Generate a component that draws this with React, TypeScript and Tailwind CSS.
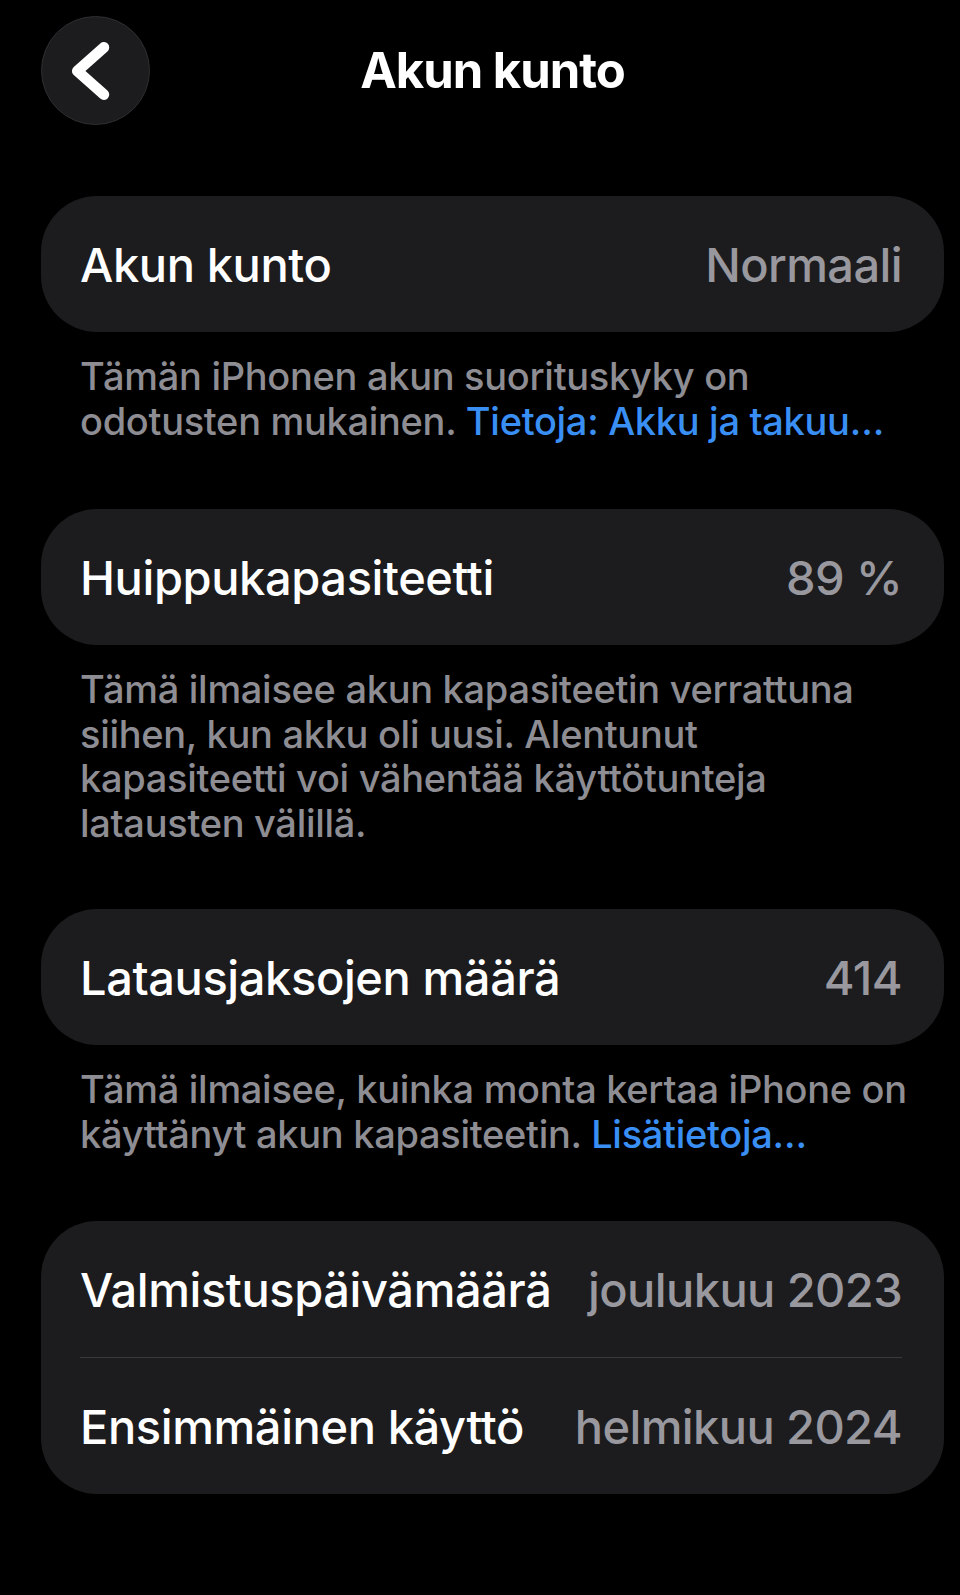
import React from 'react';

const font = { fontFamily: 'Inter, "Noto Sans", sans-serif' };

const Row = ({ label, value }: { label: string; value: string }) => (
    <div className='flex h-[136px] items-center justify-between pl-[39px] pr-[42px]'>
        <span className='text-[47px] font-medium leading-none text-white tracking-[-0.4px]'>{label}</span>
        <span className='text-[47px] font-medium leading-none text-[#98989e] tracking-[-0.6px]'>{value}</span>
    </div>
);

const Note = ({ children }: { children: React.ReactNode }) => (
    <p className='mt-[22px] pl-[39px] pr-[34px] text-[38px] font-medium leading-[44.5px] text-[#8d8d93] tracking-[-0.3px]'>
        {children}
    </p>
);

const App = () => {
    return (
        <div className='min-h-[1595px] w-full bg-black pl-[41px] pr-[16px] pt-[16px]' style={font}>
            <header className='grid grid-cols-[109px_1fr_109px] items-center'>
                <button className='flex h-[109px] w-[109px] items-center justify-center rounded-full border border-[#2e2e30] bg-[#1c1c1e]'>
                    <svg width='109' height='109' viewBox='0 0 109 109' fill='none'>
                        <path d='M63 31 L36 55 L63 79' stroke='white' strokeWidth='11' strokeLinecap='round' strokeLinejoin='round' />
                    </svg>
                </button>
                <h1 className='text-center text-[49px] font-bold text-white tracking-[-1px]'>Akun kunto</h1>
                <div />
            </header>

            <section className='mt-[71px]'>
                <div className='rounded-[56px] bg-[#1c1c1e]'>
                    <Row label='Akun kunto' value='Normaali' />
                </div>
                <Note>
                    Tämän iPhonen akun suorituskyky on odotusten mukainen.{' '}
                    <span className='text-[#3a8ff5]'>Tietoja: Akku ja takuu…</span>
                </Note>
            </section>

            <section className='mt-[66px]'>
                <div className='rounded-[56px] bg-[#1c1c1e]'>
                    <Row label='Huippukapasiteetti' value='89 %' />
                </div>
                <Note>
                    Tämä ilmaisee akun kapasiteetin verrattuna siihen, kun akku oli uusi. Alentunut kapasiteetti voi vähentää käyttötunteja latausten välillä.
                </Note>
            </section>

            <section className='mt-[64px]'>
                <div className='rounded-[56px] bg-[#1c1c1e]'>
                    <Row label='Latausjaksojen määrä' value='414' />
                </div>
                <Note>
                    Tämä ilmaisee, kuinka monta kertaa iPhone on käyttänyt akun kapasiteetin.{' '}
                    <span className='text-[#3a8ff5]'>Lisätietoja…</span>
                </Note>
            </section>

            <section className='mt-[65px]'>
                <div className='rounded-[56px] bg-[#1c1c1e]'>
                    <Row label='Valmistuspäivämäärä' value='joulukuu 2023' />
                    <div className='ml-[39px] mr-[42px] h-px bg-[#3a3a3c]' />
                    <Row label='Ensimmäinen käyttö' value='helmikuu 2024' />
                </div>
            </section>
        </div>
    );
};

export default App;
